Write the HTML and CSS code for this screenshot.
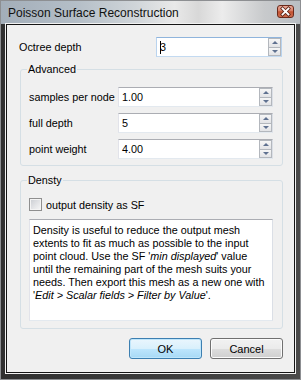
FILE: index.html
```html
<!DOCTYPE html>
<html lang="en">
<head>
    <meta charset="UTF-8">
    <meta name="viewport" content="width=device-width, initial-scale=1.0">
    <title>Poisson Surface Reconstruction</title>
    <link rel="stylesheet" href="styles.css">
</head>
<body>
    <div class="window">
        <div class="titlebar">
            <span class="title">Poisson Surface Reconstruction</span>
            <span class="close">
                <svg width="15" height="11" viewBox="0 0 15 11">
                    <path d="M4.5 2.5 L10.5 8.5 M10.5 2.5 L4.5 8.5" stroke="#5a2418" stroke-width="3.4" stroke-linecap="square"/>
                    <path d="M4.5 2.5 L10.5 8.5 M10.5 2.5 L4.5 8.5" stroke="#ffffff" stroke-width="1.8" stroke-linecap="square"/>
                </svg>
            </span>
        </div>
        <div class="frame">
            <div class="client">
                <div class="octree">
                    <label>Octree depth</label>
                    <div class="spin focus">
                        <span class="val"><span class="caret"></span>3</span>
                        <span class="arrows"><span class="up"></span><span class="down"></span></span>
                    </div>
                </div>

                <fieldset class="group adv">
                    <legend>Advanced</legend>
                    <div class="fields">
                        <label>samples per node</label>
                        <div class="spin">
                            <span class="val">1.00</span>
                            <span class="arrows"><span class="up"></span><span class="down"></span></span>
                        </div>
                        <label>full depth</label>
                        <div class="spin">
                            <span class="val">5</span>
                            <span class="arrows"><span class="up"></span><span class="down"></span></span>
                        </div>
                        <label>point weight</label>
                        <div class="spin">
                            <span class="val">4.00</span>
                            <span class="arrows"><span class="up"></span><span class="down"></span></span>
                        </div>
                    </div>
                </fieldset>

                <fieldset class="group dens">
                    <legend>Densty</legend>
                    <div class="check"><span class="box"></span><span>output density as SF</span></div>
                    <div class="note">
                        Density is useful to reduce the output mesh<br>
                        extents to fit as much as possible to the input<br>
                        point cloud. Use the SF '<i>min displayed</i>' value<br>
                        until the remaining part of the mesh suits your<br>
                        needs. Then export this mesh as a new one with<br>
                        '<i>Edit &gt; Scalar fields &gt; Filter by Value</i>'.
                    </div>
                </fieldset>

                <div class="buttons">
                    <button class="btn default">OK</button>
                    <button class="btn">Cancel</button>
                </div>
            </div>
        </div>
    </div>
</body>
</html>
```
FILE: styles.css
```css
body {
    margin: 0;
    background: #2e2e2e;
    font-family: "Liberation Sans", Arial, sans-serif;
    font-size: 10.8px;
    color: #000;
}
.window {
    width: 301px;
    height: 380px;
    box-sizing: border-box;
    border: 1px solid #8d8f92;
    display: flex;
    flex-direction: column;
    background: linear-gradient(90deg, #303030 0%, #3b3b3b 50%, #4a4a4a 100%);
}
.titlebar {
    height: 23px;
    flex: none;
    display: flex;
    align-items: flex-start;
    justify-content: space-between;
    padding: 0 6px 0 7px;
    background: linear-gradient(90deg, #a3aeb9 0%, #b4bec7 25%, #d0d5d9 45%, #e9e9e9 58%, #d8d8d8 66%, #ececec 74%, #c8cacc 88%, #b9bec3 100%);
}
.title {
    font-size: 12px;
    line-height: 14px;
    margin-top: 5px;
    color: #111;
}
.close {
    width: 15px;
    height: 11px;
    margin-top: 4px;
    border: 1px solid #6a2a1c;
    border-radius: 3px;
    background: linear-gradient(#e9a897 0%, #d77d65 45%, #c2502f 52%, #cf6d4f 100%);
    display: flex;
}
.frame {
    flex: 1;
    padding: 0 5px 6px 5px;
    display: flex;
}
.client {
    flex: 1;
    border: 1px solid #151515;
    box-shadow: 0 0 0 1px #f2f2f2;
    background: #f0f0f0;
    padding: 12px 11px 12px 13px;
    display: flex;
    flex-direction: column;
}
.octree {
    display: flex;
    align-items: center;
    margin: 0 1px 0 -1px;
}
.octree label {
    flex: 1;
}
.octree .spin {
    width: 126px;
}
.spin {
    height: 20px;
    box-sizing: border-box;
    display: flex;
    background: #fff;
    border: 1px solid;
    border-color: #abadb3 #dbdfe6 #e3e9ef #e2e3ea;
}
.spin.focus {
    border-color: #8fb4dc #b9d3ee #c3daf1 #b9d3ee;
}
.val {
    flex: 1;
    line-height: 18px;
    padding-left: 3px;
    display: flex;
    align-items: center;
}
.caret {
    width: 1px;
    height: 13px;
    background: #000;
    margin-right: -1px;
}
.arrows {
    width: 13px;
    display: flex;
    flex-direction: column;
}
.arrows span {
    flex: 1;
    box-sizing: border-box;
    border: 1px solid #b3b7bd;
    background: linear-gradient(#f6f6f6, #e2e3e6);
    display: flex;
    align-items: center;
    justify-content: center;
}
.arrows .down {
    border-top: none;
}
.arrows .up::after,
.arrows .down::after {
    content: "";
    border-left: 3px solid transparent;
    border-right: 3px solid transparent;
}
.arrows .up::after {
    border-bottom: 3px solid #5f7190;
}
.arrows .down::after {
    border-top: 3px solid #5f7190;
}
.group {
    border: 1px solid #d5dfe5;
    border-radius: 3px;
    margin: 0;
    padding: 0 9px 0 8px;
}
.group legend {
    line-height: 13px;
    padding: 0 1px;
    margin-left: -2px;
}
.adv {
    margin-top: 6px;
    padding-top: 11px;
    padding-bottom: 6px;
}
.fields {
    display: grid;
    grid-template-columns: 89px 1fr;
    row-gap: 6px;
    align-items: center;
}
.dens {
    margin-top: 8px;
    padding-top: 11px;
    padding-bottom: 7px;
}
.check {
    display: flex;
    align-items: center;
    gap: 4px;
    height: 13px;
}
.box {
    width: 13px;
    height: 13px;
    box-sizing: border-box;
    border: 1px solid #8f8f8f;
    box-shadow: inset 0 0 0 1px #f4f4f4;
    background: linear-gradient(135deg, #c9ccd1 0%, #e6e7e9 60%, #f7f7f7 100%);
}
.note {
    margin-top: 8px;
    height: 102px;
    box-sizing: border-box;
    background: #fff;
    border: 1px solid;
    border-color: #abadb3 #dbdfe6 #e3e9ef #e2e3ea;
    padding: 4px 3px;
    line-height: 13px;
    white-space: nowrap;
    overflow: hidden;
}
.buttons {
    margin-top: 9px;
    display: flex;
    justify-content: flex-end;
    gap: 8px;
}
.btn {
    width: 73px;
    height: 21px;
    font-family: "Liberation Sans", Arial, sans-serif;
    font-size: 11px;
    color: #000;
    border: 1px solid #707070;
    border-radius: 3px;
    box-shadow: inset 0 0 0 1px #fbfbfb;
    background: linear-gradient(#f2f2f2 0%, #ebebeb 50%, #dddddd 51%, #cfcfcf 100%);
    padding: 0;
}
.btn.default {
    border-color: #3c7fb1;
    box-shadow: inset 0 0 0 1px #bfe6fb;
    background: linear-gradient(#eaf6fd 0%, #d9f0fc 50%, #bee6fd 51%, #a7d9f5 100%);
}
```
